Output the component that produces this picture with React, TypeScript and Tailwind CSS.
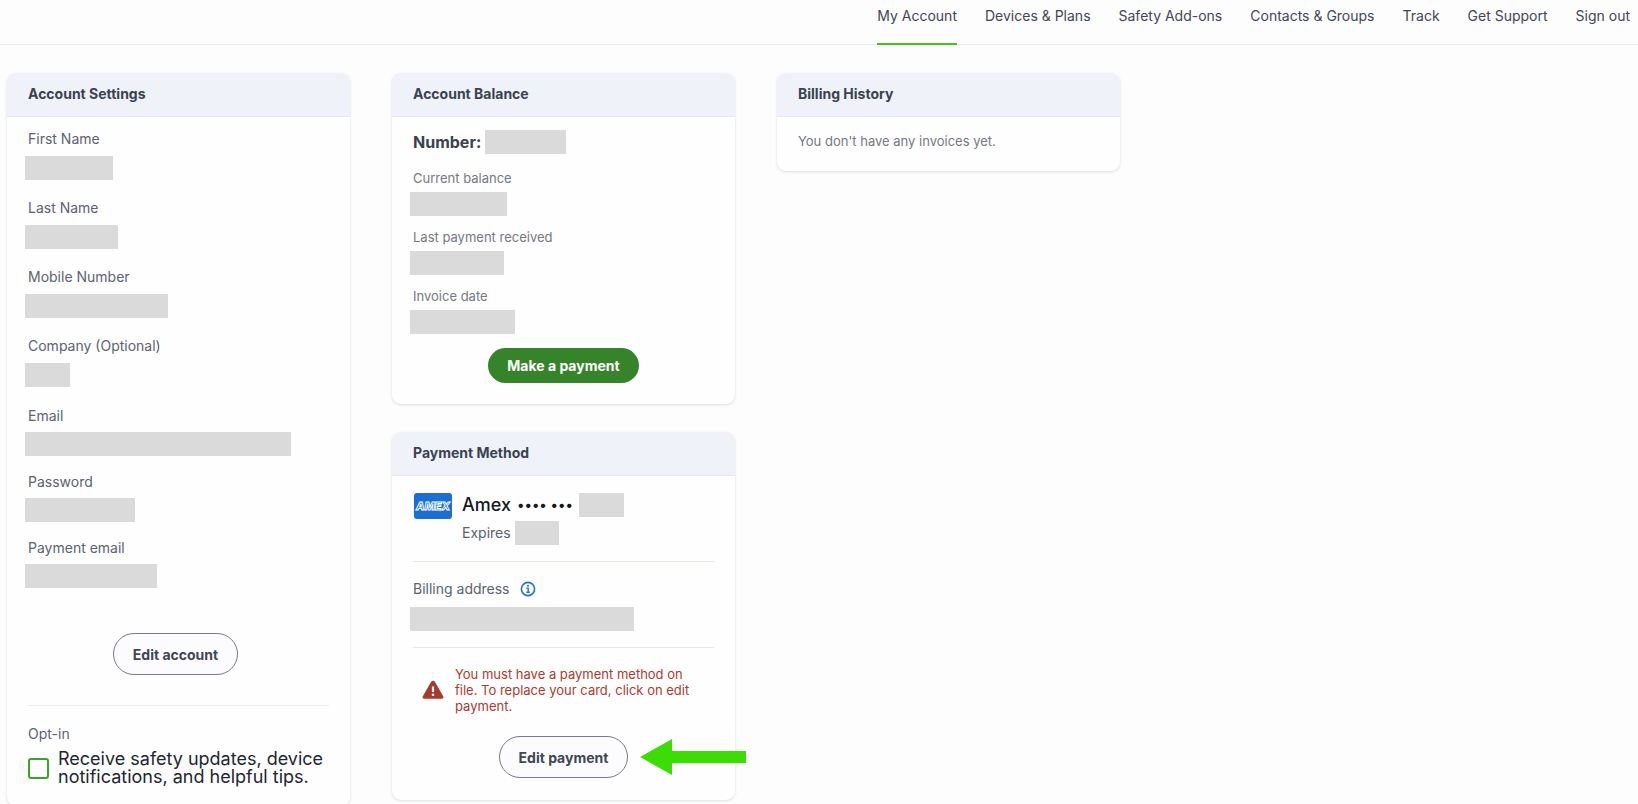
import type { ReactNode } from 'react';

const NAV_ITEMS = [
  'My Account',
  'Devices & Plans',
  'Safety Add-ons',
  'Contacts & Groups',
  'Track',
  'Get Support',
  'Sign out'
];

const PROFILE_FIELDS = [
  { label: 'First Name', width: 'w-[88px]' },
  { label: 'Last Name', width: 'w-[93px]' },
  { label: 'Mobile Number', width: 'w-[143px]' },
  { label: 'Company (Optional)', width: 'w-[45px]' }
];

const LOGIN_FIELDS = [
  { label: 'Email', width: 'w-[266px]' },
  { label: 'Password', width: 'w-[110px]' },
  { label: 'Payment email', width: 'w-[132px]' }
];

const BALANCE_FIELDS = [
  { label: 'Current balance', width: 'w-[97px]' },
  { label: 'Last payment received', width: 'w-[94px]' },
  { label: 'Invoice date', width: 'w-[105px]' }
];

// Grey block shown in place of private data
function Hidden({ className }: { className: string }) {
  return <span className={`block h-6 bg-[#dadada] ${className}`} />;
}

function Card({ title, children }: { title: string; children: ReactNode }) {
  return (
    <section className="rounded-[9px] bg-[#fefefe] shadow-[0_1px_3px_rgba(40,50,70,0.16)]">
      <h2 className="rounded-t-[9px] border-b border-[#e6e9f2] bg-[#eff2f9] px-[21px] pt-[11px] pb-3 text-[14px] leading-5 font-bold text-[#3a4252]">
        {title}
      </h2>
      {children}
    </section>
  );
}

function OutlineButton({ children }: { children: ReactNode }) {
  return (
    <button
      type="button"
      className="h-[42px] rounded-full border border-[#757b8c] bg-[#fcfcff] px-[19px] text-[14px] font-bold text-[#3f4654]"
    >
      {children}
    </button>
  );
}

function AmexLogo() {
  return (
    <svg width="38" height="26" viewBox="0 0 38 26" className="shrink-0" role="img" aria-label="American Express">
      <rect width="38" height="26" rx="3" fill="#1a6fd1" />
      <text
        x="19"
        y="17"
        textAnchor="middle"
        fontFamily="Inter, sans-serif"
        fontSize="11"
        fontWeight="800"
        fontStyle="italic"
        fill="#1a6fd1"
        stroke="#ffffff"
        strokeWidth="0.9"
      >
        AMEX
      </text>
    </svg>
  );
}

function InfoIcon() {
  return (
    <svg width="16" height="16" viewBox="0 0 16 16" fill="none" aria-hidden="true">
      <circle cx="8" cy="8" r="6.6" stroke="#1f74dc" strokeWidth="1.6" />
      <circle cx="8" cy="4.8" r="1" fill="#1f74dc" />
      <path d="M6.6 7.2h1.6v4M6.4 11.3h3.4" stroke="#1f74dc" strokeWidth="1.4" />
    </svg>
  );
}

function WarningIcon() {
  return (
    <svg width="22" height="20" viewBox="0 0 22 20" className="shrink-0" aria-hidden="true">
      <path
        d="M9.3 1.6c.8-1.3 2.6-1.3 3.4 0l8.5 14.6c.7 1.2-.1 2.5-1.4 2.5H2.2c-1.3 0-2.1-1.3-1.4-2.5z"
        fill="#a63a2c"
      />
      <path d="M11 6.5v5.6" stroke="#fff" strokeWidth="2.2" />
      <circle cx="11" cy="14.7" r="1.3" fill="#fff" />
    </svg>
  );
}

export default function App() {
  return (
    <div className="min-h-screen bg-[#fdfdfd] font-['Inter',sans-serif]">
      <header className="border-b border-[#e9ebee]">
        <nav className="-mb-px flex justify-end gap-7 px-2">
          {NAV_ITEMS.map((item, index) => (
            <a
              key={item}
              href="#"
              aria-current={index === 0 ? 'page' : undefined}
              className={`border-b-2 pt-1.5 pb-[17px] text-[14px] leading-5 text-[#3f4654] ${
                index === 0 ? 'border-[#3fc51c]' : 'border-transparent'
              }`}
            >
              {item}
            </a>
          ))}
        </nav>
      </header>

      <main className="grid grid-cols-[repeat(3,minmax(0,343px))] items-start gap-x-[42px] px-[7px] pt-7">
        {/* Account settings */}
        <Card title="Account Settings">
          <div className="px-[18px] pt-3 pb-5">
            <dl className="space-y-[18px] text-[14px] leading-5 text-[#5b6270]">
              {PROFILE_FIELDS.map((field) => (
                <div key={field.label}>
                  <dt className="pl-[3px]">{field.label}</dt>
                  <dd className="mt-[7px]">
                    <Hidden className={field.width} />
                  </dd>
                </div>
              ))}
            </dl>
            <dl className="mt-[19px] space-y-4 text-[14px] leading-5 text-[#5b6270]">
              {LOGIN_FIELDS.map((field) => (
                <div key={field.label}>
                  <dt className="pl-[3px]">{field.label}</dt>
                  <dd className="mt-1.5">
                    <Hidden className={field.width} />
                  </dd>
                </div>
              ))}
            </dl>
            <div className="mt-[45px] flex justify-center pr-1.5">
              <OutlineButton>Edit account</OutlineButton>
            </div>
            <div className="mx-[3px] mt-[30px] border-t border-[#e9ecf0] pt-[18px]">
              <p className="text-[14px] leading-5 text-[#5b6270]">Opt-in</p>
              <label className="mt-1.5 flex items-center gap-[9px] text-[18px] leading-[18px] text-[#22262e]">
                <input
                  type="checkbox"
                  className="size-[21px] shrink-0 appearance-none rounded-[3px] border-2 border-[#38a52a] bg-white"
                />
                <span className="-mr-3">Receive safety updates, device notifications, and helpful tips.</span>
              </label>
            </div>
          </div>
        </Card>

        <div className="space-y-7">
          {/* Balance */}
          <Card title="Account Balance">
            <div className="px-[18px] pt-[13px] pb-[21px]">
              <div className="flex items-center gap-1 pl-[3px] text-[16px] leading-6 font-bold text-[#3a4252]">
                Number:
                <Hidden className="w-[81px]" />
              </div>
              <dl className="mt-[14px] space-y-[11px] text-[13px] leading-5 text-[#747982]">
                {BALANCE_FIELDS.map((field) => (
                  <div key={field.label}>
                    <dt className="pl-[3px]">{field.label}</dt>
                    <dd className="mt-1">
                      <Hidden className={field.width} />
                    </dd>
                  </div>
                ))}
              </dl>
              <div className="mt-[14px] flex justify-center">
                <button
                  type="button"
                  className="h-[35px] rounded-full bg-[#36842a] px-[19px] text-[14px] font-bold text-white"
                >
                  Make a payment
                </button>
              </div>
            </div>
          </Card>

          {/* Payment method */}
          <Card title="Payment Method">
            <div className="px-[18px] pt-[17px] pb-[22px]">
              <div className="flex gap-2.5 pl-1">
                <AmexLogo />
                <div>
                  <div className="flex items-center gap-1.5 text-[18px] leading-6 font-medium text-[#16181d]">
                    Amex
                    <span className="text-[14px]">•••• •••</span>
                    <Hidden className="w-[45px]" />
                  </div>
                  <div className="mt-1 flex items-center gap-1 text-[14px] leading-6 text-[#5b6270]">
                    Expires
                    <Hidden className="w-11" />
                  </div>
                </div>
              </div>

              <hr className="mx-[3px] mt-4 border-[#e3e9f2]" />

              <div className="mt-[17px] flex items-center gap-2.5 pl-[3px]">
                <span className="text-[14px] leading-5 text-[#5b6270]">Billing address</span>
                <button type="button" aria-label="About billing address">
                  <InfoIcon />
                </button>
              </div>
              <div className="mt-2">
                <Hidden className="w-56" />
              </div>

              <hr className="mx-[3px] mt-4 border-[#e3e9f2]" />

              <div className="mt-[18px] flex items-center gap-[11px] pr-6 pl-3">
                <WarningIcon />
                <p className="text-[13px] leading-4 text-[#ac3b2f]">
                  You must have a payment method on file. To replace your card, click on edit payment.
                </p>
              </div>

              <div className="mt-[22px] flex justify-center">
                <div className="relative">
                  <OutlineButton>Edit payment</OutlineButton>
                  <svg
                    width="106"
                    height="36"
                    viewBox="0 0 106 36"
                    className="absolute top-[3px] left-full ml-3 max-w-none"
                    aria-hidden="true"
                  >
                    <path d="M0 18 32 0v12h74v12H32v12z" fill="#3cdc05" />
                  </svg>
                </div>
              </div>
            </div>
          </Card>
        </div>

        {/* Billing history */}
        <Card title="Billing History">
          <p className="px-[21px] pt-[14px] pb-5 text-[13px] leading-5 text-[#747982]">
            You don't have any invoices yet.
          </p>
        </Card>
      </main>
    </div>
  );
}
